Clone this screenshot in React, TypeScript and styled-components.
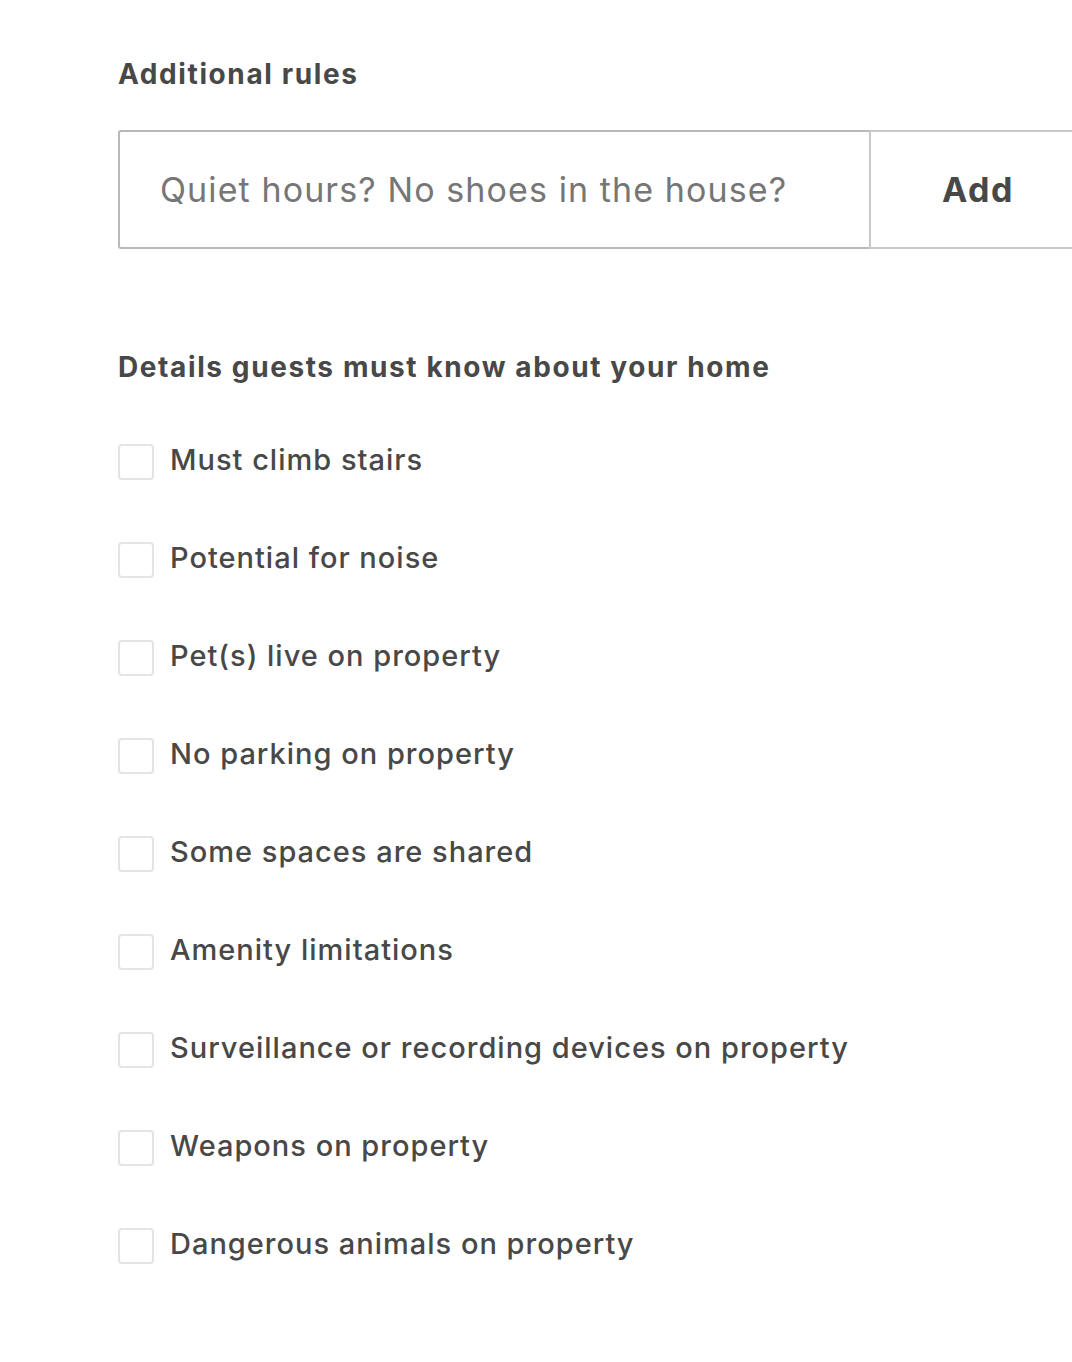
import React from 'react';
import styled, { createGlobalStyle } from 'styled-components';

const GlobalStyle = createGlobalStyle`
  html, body {
    margin: 0;
    padding: 0;
    background: #ffffff;
    overflow: hidden;
  }
  body {
    font-family: Inter, "Noto Sans", "Liberation Sans", sans-serif;
    color: #484848;
  }
`;

const Page = styled.div`
  padding: 54px 0 0 118px;
  width: 1200px;
`;

const Heading = styled.h2`
  margin: 0;
  font-size: 28px;
  line-height: 40px;
  font-weight: 700;
  color: #484848;
  letter-spacing: 1.6px;
`;

const InputRow = styled.div`
  display: flex;
  margin-top: 36px;
  height: 119px;
`;

const TextInput = styled.input`
  box-sizing: border-box;
  width: 751px;
  height: 100%;
  border: 2px solid #b9b9b9;
  border-right: none;
  border-radius: 3px 0 0 3px;
  padding: 0 40px;
  font-family: inherit;
  font-size: 34px;
  letter-spacing: 1.1px;
  color: #484848;
  outline: none;

  &::placeholder {
    color: #767676;
  }
`;

const AddButton = styled.button`
  box-sizing: border-box;
  width: 218px;
  height: 100%;
  border: 2px solid #c8c8c8;
  background: #ffffff;
  font-family: inherit;
  font-size: 34px;
  font-weight: 700;
  letter-spacing: 1.5px;
  color: #484848;
  cursor: pointer;
`;

const Section = styled.section`
  margin-top: 98px;
`;

const List = styled.ul`
  list-style: none;
  margin: 55px 0 0;
  padding: 0;
  display: flex;
  flex-direction: column;
  gap: 58px;
`;

const Item = styled.li`
  display: flex;
  align-items: center;
  gap: 16px;
  height: 40px;
`;

const Box = styled.span`
  box-sizing: border-box;
  width: 36px;
  height: 36px;
  border: 2px solid #e4e4e4;
  border-radius: 4px;
  background: #ffffff;
  flex-shrink: 0;
`;

const Label = styled.span`
  font-size: 29px;
  font-weight: 500;
  color: #484848;
  letter-spacing: 1px;
  margin-bottom: 5px;
`;

const details = [
  'Must climb stairs',
  'Potential for noise',
  'Pet(s) live on property',
  'No parking on property',
  'Some spaces are shared',
  'Amenity limitations',
  'Surveillance or recording devices on property',
  'Weapons on property',
  'Dangerous animals on property',
];

export default function App() {
  return (
    <>
      <GlobalStyle />
      <Page>
        <Heading>Additional rules</Heading>
        <InputRow>
          <TextInput placeholder="Quiet hours? No shoes in the house?" />
          <AddButton>Add</AddButton>
        </InputRow>
        <Section>
          <Heading>Details guests must know about your home</Heading>
          <List>
            {details.map((d) => (
              <Item key={d}>
                <Box />
                <Label>{d}</Label>
              </Item>
            ))}
          </List>
        </Section>
      </Page>
    </>
  );
}
